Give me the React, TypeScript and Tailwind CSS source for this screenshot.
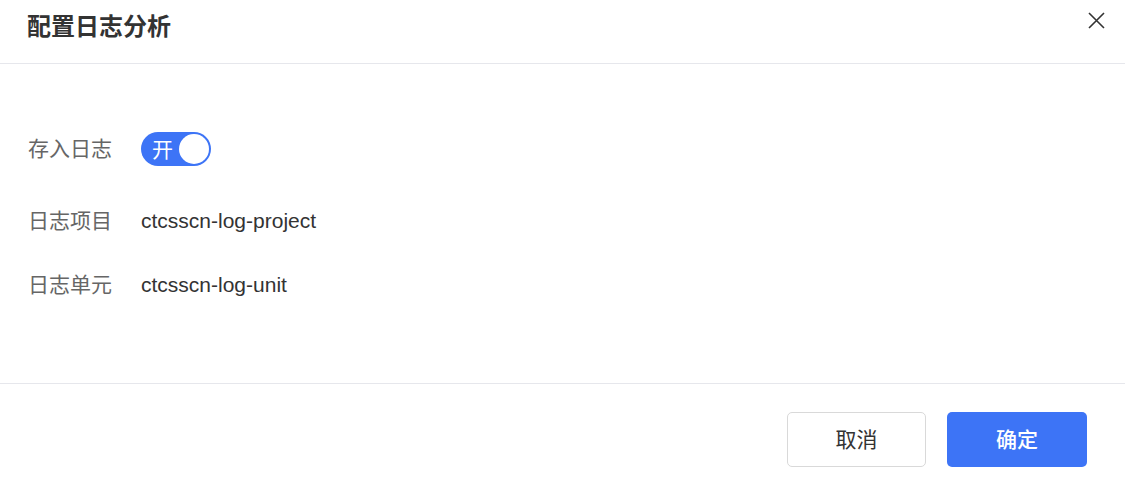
import React from 'react';

function Row({ label, children, className = '' }: { label: string; children: React.ReactNode; className?: string }) {
    return (
        <div className={`flex h-[34px] items-center ${className}`}>
            <div className="w-[113px] text-[21px] leading-[34px] text-[#666666]">{label}</div>
            <div className="text-[21px] leading-[34px] text-[#333333]">{children}</div>
        </div>
    );
}

export default function App() {
    return (
        <div className="h-[486px] w-[1125px] bg-white" style={{ fontFamily: '"Liberation Sans", "Noto Sans CJK SC", sans-serif' }}>
            {/* header */}
            <div className="relative h-[64px] border-b border-[#e6e7ec] px-[27px] pt-[13px]">
                <h2 className="text-[24px] font-bold leading-[28px] text-[#333333]">配置日志分析</h2>
                <button className="absolute right-[20px] top-[12px] h-[17px] w-[17px] text-[#333333]">
                    <svg viewBox="0 0 17 17" className="h-[17px] w-[17px]" fill="none" stroke="currentColor" strokeWidth="1.6">
                        <path d="M1 1L16 16M16 1L1 16" />
                    </svg>
                </button>
            </div>

            {/* body */}
            <div className="h-[320px] border-b border-[#e6e7ec] px-[28px] pt-[68px]">
                <Row label="存入日志">
                    <div className="flex h-[34px] w-[70px] items-center justify-between rounded-full bg-[#3d74f6] pl-[11px] pr-[2px]">
                        <span className="text-[21px] leading-none text-white">开</span>
                        <span className="h-[30px] w-[30px] rounded-full bg-white" />
                    </div>
                </Row>
                <Row label="日志项目" className="mt-[38px]">ctcsscn-log-project</Row>
                <Row label="日志单元" className="mt-[30px]">ctcsscn-log-unit</Row>
            </div>

            {/* footer */}
            <div className="flex justify-end gap-[21px] pr-[38px] pt-[28px]">
                <button className="h-[55px] w-[139px] rounded-[5px] border border-[#d9d9d9] bg-white text-[21px] text-[#333333]">取消</button>
                <button className="h-[55px] w-[140px] rounded-[5px] bg-[#3d74f6] text-[21px] font-medium text-white">确定</button>
            </div>
        </div>
    );
}
